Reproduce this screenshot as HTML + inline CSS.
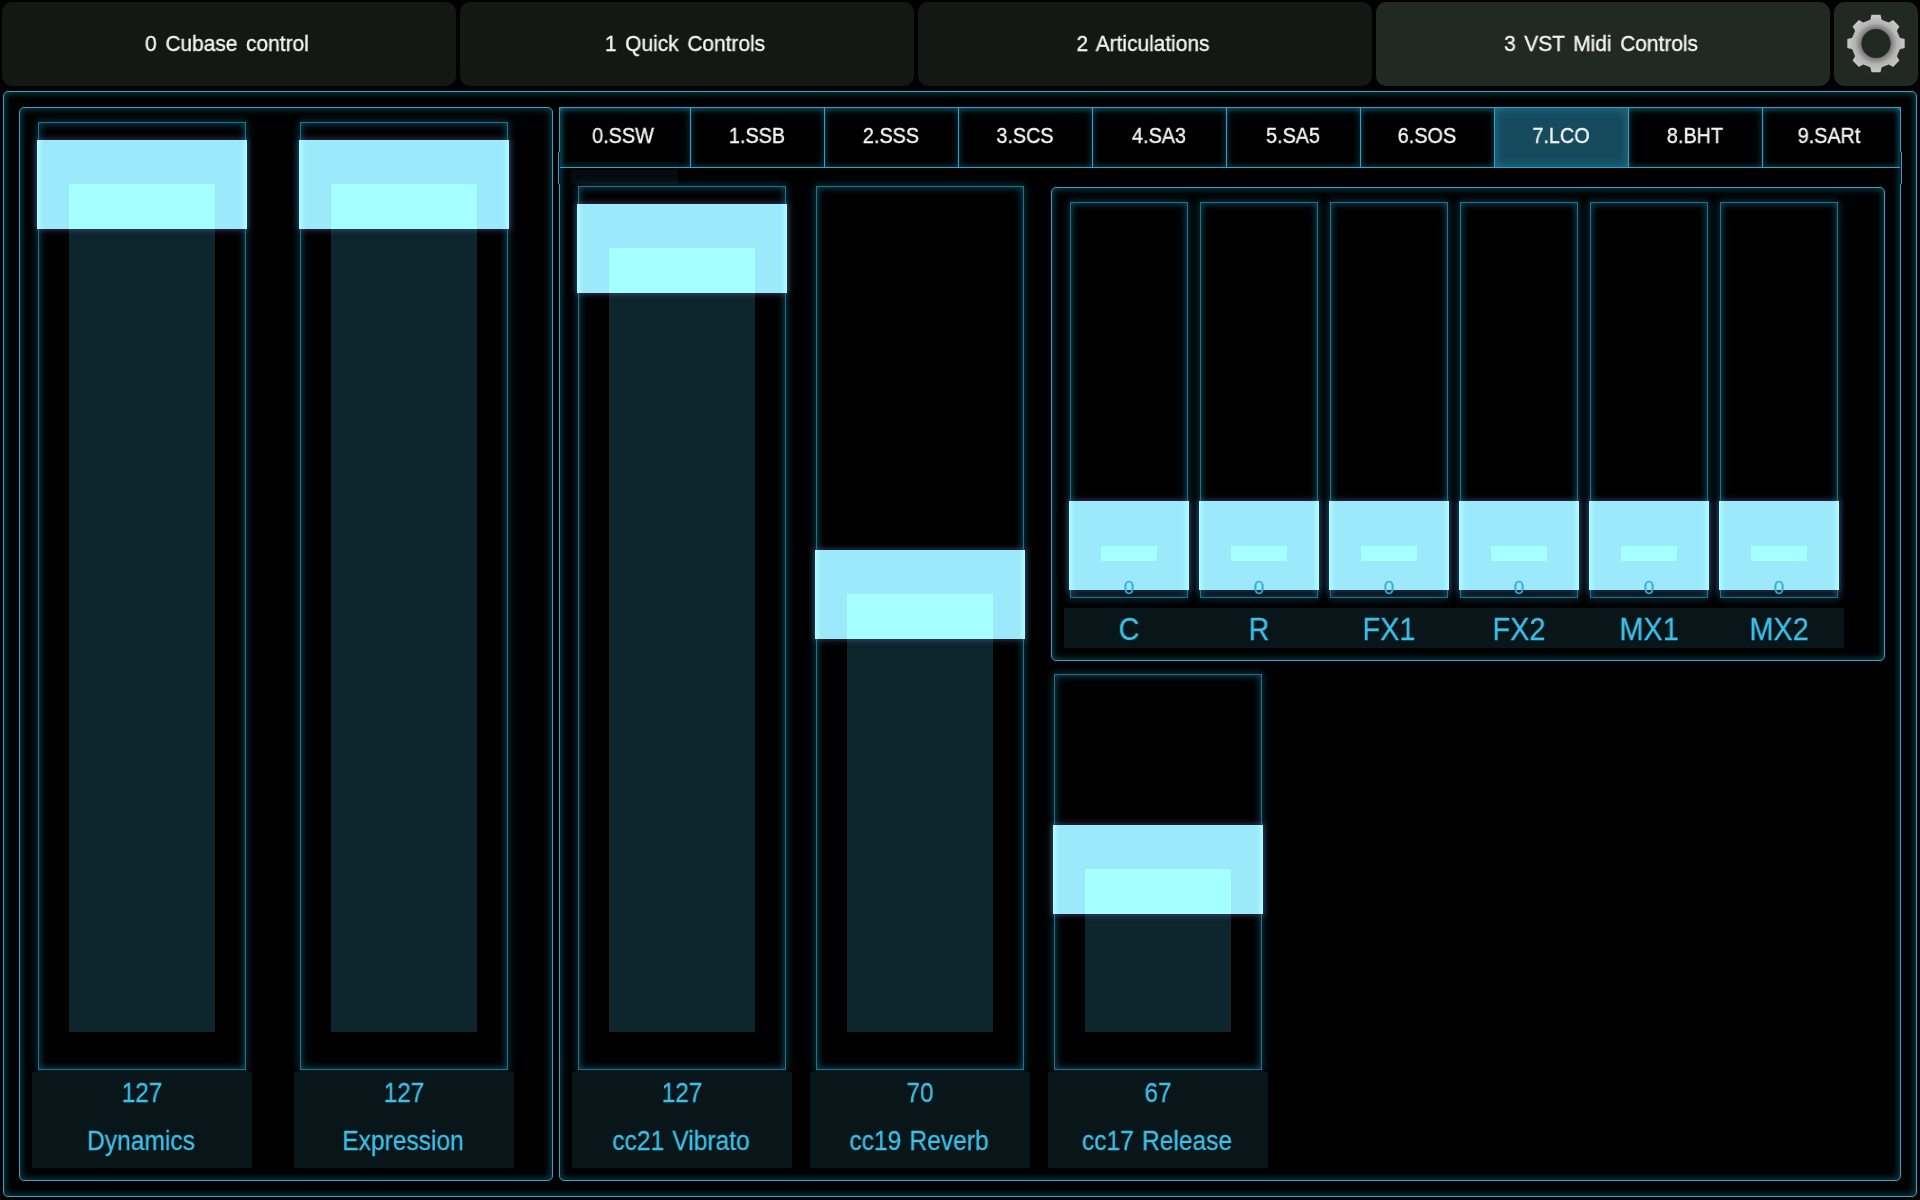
<!DOCTYPE html>
<html><head><meta charset="utf-8"><style>
html,body{margin:0;padding:0;background:#000;width:1920px;height:1200px;overflow:hidden;}
body{position:relative;font-family:"Liberation Sans",sans-serif;}
body>div{position:absolute;}
.t{text-align:center;white-space:nowrap;will-change:transform;}
</style></head><body>
<div style="left:2px;top:2px;width:454px;height:84px;background:#141814;border-radius:10px;"></div>
<div class="t" style="left:-73.0px;top:33px;width:600px;height:22px;line-height:22px;font-size:22px;color:#f4f4f4;transform:scaleX(0.95);word-spacing:3px;-webkit-text-stroke:0.35px #f4f4f4;">0 Cubase control</div>
<div style="left:460px;top:2px;width:454px;height:84px;background:#141814;border-radius:10px;"></div>
<div class="t" style="left:385.0px;top:33px;width:600px;height:22px;line-height:22px;font-size:22px;color:#f4f4f4;transform:scaleX(0.95);word-spacing:3px;-webkit-text-stroke:0.35px #f4f4f4;">1 Quick Controls</div>
<div style="left:918px;top:2px;width:454px;height:84px;background:#141814;border-radius:10px;"></div>
<div class="t" style="left:843.0px;top:33px;width:600px;height:22px;line-height:22px;font-size:22px;color:#f4f4f4;transform:scaleX(0.95);word-spacing:3px;-webkit-text-stroke:0.35px #f4f4f4;">2 Articulations</div>
<div style="left:1376px;top:2px;width:454px;height:84px;background:#222823;border-radius:10px;"></div>
<div class="t" style="left:1301.0px;top:33px;width:600px;height:22px;line-height:22px;font-size:22px;color:#f4f4f4;transform:scaleX(0.95);word-spacing:3px;-webkit-text-stroke:0.35px #f4f4f4;">3 VST Midi Controls</div>
<div style="left:1834px;top:2px;width:84px;height:84px;background:#222823;border-radius:10px;"></div>
<div style="left:3px;top:91px;width:1914px;height:1106px;border:1px solid #2ca4cc;border-radius:5px;box-sizing:border-box;box-shadow:inset 0 0 7px 1px rgba(25,115,145,0.6);"></div>
<div style="left:19px;top:107px;width:534px;height:1074px;border:1px solid #2ca4cc;border-radius:5px;box-sizing:border-box;box-shadow:inset 0 0 7px 1px rgba(25,115,145,0.6);"></div>
<div style="left:559px;top:107px;width:1342px;height:1074px;border:1px solid #2ca4cc;border-radius:5px;box-sizing:border-box;box-shadow:inset 0 0 7px 1px rgba(25,115,145,0.6);"></div>
<div style="left:571px;top:170px;width:107px;height:14px;background:#040c0f;"></div>
<div style="left:571px;top:162px;width:107px;height:2px;background:#030a0c;"></div>
<div style="left:559px;top:107px;width:132px;height:61px;border:1px solid #2ca4cc;box-sizing:border-box;box-shadow:inset 0 0 6px 1px rgba(25,115,145,0.45);"></div>
<div class="t" style="left:323.0px;top:125px;width:600px;height:22px;line-height:22px;font-size:22px;color:#f4f4f4;transform:scaleX(0.9);-webkit-text-stroke:0.35px #f4f4f4;">0.SSW</div>
<div style="left:690px;top:107px;width:135px;height:61px;border:1px solid #2ca4cc;box-sizing:border-box;box-shadow:inset 0 0 6px 1px rgba(25,115,145,0.45);"></div>
<div class="t" style="left:457.0px;top:125px;width:600px;height:22px;line-height:22px;font-size:22px;color:#f4f4f4;transform:scaleX(0.9);-webkit-text-stroke:0.35px #f4f4f4;">1.SSB</div>
<div style="left:824px;top:107px;width:135px;height:61px;border:1px solid #2ca4cc;box-sizing:border-box;box-shadow:inset 0 0 6px 1px rgba(25,115,145,0.45);"></div>
<div class="t" style="left:591.0px;top:125px;width:600px;height:22px;line-height:22px;font-size:22px;color:#f4f4f4;transform:scaleX(0.9);-webkit-text-stroke:0.35px #f4f4f4;">2.SSS</div>
<div style="left:958px;top:107px;width:135px;height:61px;border:1px solid #2ca4cc;box-sizing:border-box;box-shadow:inset 0 0 6px 1px rgba(25,115,145,0.45);"></div>
<div class="t" style="left:725.0px;top:125px;width:600px;height:22px;line-height:22px;font-size:22px;color:#f4f4f4;transform:scaleX(0.9);-webkit-text-stroke:0.35px #f4f4f4;">3.SCS</div>
<div style="left:1092px;top:107px;width:135px;height:61px;border:1px solid #2ca4cc;box-sizing:border-box;box-shadow:inset 0 0 6px 1px rgba(25,115,145,0.45);"></div>
<div class="t" style="left:859.0px;top:125px;width:600px;height:22px;line-height:22px;font-size:22px;color:#f4f4f4;transform:scaleX(0.9);-webkit-text-stroke:0.35px #f4f4f4;">4.SA3</div>
<div style="left:1226px;top:107px;width:135px;height:61px;border:1px solid #2ca4cc;box-sizing:border-box;box-shadow:inset 0 0 6px 1px rgba(25,115,145,0.45);"></div>
<div class="t" style="left:993.0px;top:125px;width:600px;height:22px;line-height:22px;font-size:22px;color:#f4f4f4;transform:scaleX(0.9);-webkit-text-stroke:0.35px #f4f4f4;">5.SA5</div>
<div style="left:1360px;top:107px;width:135px;height:61px;border:1px solid #2ca4cc;box-sizing:border-box;box-shadow:inset 0 0 6px 1px rgba(25,115,145,0.45);"></div>
<div class="t" style="left:1127.0px;top:125px;width:600px;height:22px;line-height:22px;font-size:22px;color:#f4f4f4;transform:scaleX(0.9);-webkit-text-stroke:0.35px #f4f4f4;">6.SOS</div>
<div style="left:1494px;top:107px;width:135px;height:61px;background:#164b5e;border:1px solid #2ca4cc;box-sizing:border-box;box-shadow:inset 0 0 8px 1px rgba(40,140,175,0.55);"></div>
<div class="t" style="left:1261.0px;top:125px;width:600px;height:22px;line-height:22px;font-size:22px;color:#f4f4f4;transform:scaleX(0.9);-webkit-text-stroke:0.35px #f4f4f4;">7.LCO</div>
<div style="left:1628px;top:107px;width:135px;height:61px;border:1px solid #2ca4cc;box-sizing:border-box;box-shadow:inset 0 0 6px 1px rgba(25,115,145,0.45);"></div>
<div class="t" style="left:1395.0px;top:125px;width:600px;height:22px;line-height:22px;font-size:22px;color:#f4f4f4;transform:scaleX(0.9);-webkit-text-stroke:0.35px #f4f4f4;">8.BHT</div>
<div style="left:1762px;top:107px;width:139px;height:61px;border:1px solid #2ca4cc;box-sizing:border-box;box-shadow:inset 0 0 6px 1px rgba(25,115,145,0.45);"></div>
<div class="t" style="left:1529.0px;top:125px;width:600px;height:22px;line-height:22px;font-size:22px;color:#f4f4f4;transform:scaleX(0.9);-webkit-text-stroke:0.35px #f4f4f4;">9.SARt</div>
<div style="left:559px;top:152px;width:1px;height:32px;background:#06161c;"></div>
<div style="left:558px;top:152px;width:1px;height:32px;background:#2ca4cc;"></div>
<div style="left:1900px;top:152px;width:1px;height:32px;background:#06161c;"></div>
<div style="left:1901px;top:152px;width:1px;height:32px;background:#2ca4cc;"></div>
<div style="left:38px;top:122px;width:208px;height:948px;border:1px solid #1f7390;border-radius:0px;box-sizing:border-box;box-shadow:inset 0 0 7px 1px rgba(25,115,145,0.6),0 0 8px 1px rgba(25,115,145,0.45);"></div>
<div style="left:69px;top:184px;width:146px;height:848px;background:#0d252d;"></div>
<div style="left:37px;top:140px;width:210px;height:89px;background:linear-gradient(90deg,#b0ffff 0,#9ce9fb 6px,#9ce9fb calc(100% - 6px),#b0ffff 100%);box-shadow:0 0 6px 1px rgba(100,100,170,0.55);"></div>
<div style="left:69px;top:184px;width:146px;height:45px;background:#a6ffff;"></div>
<div style="left:300px;top:122px;width:208px;height:948px;border:1px solid #1f7390;border-radius:0px;box-sizing:border-box;box-shadow:inset 0 0 7px 1px rgba(25,115,145,0.6),0 0 8px 1px rgba(25,115,145,0.45);"></div>
<div style="left:331px;top:184px;width:146px;height:848px;background:#0d252d;"></div>
<div style="left:299px;top:140px;width:210px;height:89px;background:linear-gradient(90deg,#b0ffff 0,#9ce9fb 6px,#9ce9fb calc(100% - 6px),#b0ffff 100%);box-shadow:0 0 6px 1px rgba(100,100,170,0.55);"></div>
<div style="left:331px;top:184px;width:146px;height:45px;background:#a6ffff;"></div>
<div style="left:578px;top:186px;width:208px;height:884px;border:1px solid #1f7390;border-radius:0px;box-sizing:border-box;box-shadow:inset 0 0 7px 1px rgba(25,115,145,0.6),0 0 8px 1px rgba(25,115,145,0.45);"></div>
<div style="left:609px;top:248px;width:146px;height:784px;background:#0d252d;"></div>
<div style="left:577px;top:204px;width:210px;height:89px;background:linear-gradient(90deg,#b0ffff 0,#9ce9fb 6px,#9ce9fb calc(100% - 6px),#b0ffff 100%);box-shadow:0 0 6px 1px rgba(100,100,170,0.55);"></div>
<div style="left:609px;top:248px;width:146px;height:45px;background:#a6ffff;"></div>
<div style="left:816px;top:186px;width:208px;height:884px;border:1px solid #1f7390;border-radius:0px;box-sizing:border-box;box-shadow:inset 0 0 7px 1px rgba(25,115,145,0.6),0 0 8px 1px rgba(25,115,145,0.45);"></div>
<div style="left:847px;top:594px;width:146px;height:438px;background:#0d252d;"></div>
<div style="left:815px;top:550px;width:210px;height:89px;background:linear-gradient(90deg,#b0ffff 0,#9ce9fb 6px,#9ce9fb calc(100% - 6px),#b0ffff 100%);box-shadow:0 0 6px 1px rgba(100,100,170,0.55);"></div>
<div style="left:847px;top:594px;width:146px;height:45px;background:#a6ffff;"></div>
<div style="left:1054px;top:674px;width:208px;height:396px;border:1px solid #1f7390;border-radius:0px;box-sizing:border-box;box-shadow:inset 0 0 7px 1px rgba(25,115,145,0.6),0 0 8px 1px rgba(25,115,145,0.45);"></div>
<div style="left:1085px;top:869px;width:146px;height:163px;background:#0d252d;"></div>
<div style="left:1053px;top:825px;width:210px;height:89px;background:linear-gradient(90deg,#b0ffff 0,#9ce9fb 6px,#9ce9fb calc(100% - 6px),#b0ffff 100%);box-shadow:0 0 6px 1px rgba(100,100,170,0.55);"></div>
<div style="left:1085px;top:869px;width:146px;height:45px;background:#a6ffff;"></div>
<div style="left:32px;top:1072px;width:220px;height:96px;background:#081519;"></div>
<div class="t" style="left:-158.0px;top:1080px;width:600px;height:27px;line-height:27px;font-size:27px;color:#3cc0e8;transform:scaleX(0.9);-webkit-text-stroke:0.3px #3cc0e8;">127</div>
<div class="t" style="left:-159.0px;top:1128px;width:600px;height:27px;line-height:27px;font-size:27px;color:#3cc0e8;transform:scaleX(0.91);word-spacing:1.5px;-webkit-text-stroke:0.3px #3cc0e8;">Dynamics</div>
<div style="left:294px;top:1072px;width:220px;height:96px;background:#081519;"></div>
<div class="t" style="left:104.0px;top:1080px;width:600px;height:27px;line-height:27px;font-size:27px;color:#3cc0e8;transform:scaleX(0.9);-webkit-text-stroke:0.3px #3cc0e8;">127</div>
<div class="t" style="left:103.0px;top:1128px;width:600px;height:27px;line-height:27px;font-size:27px;color:#3cc0e8;transform:scaleX(0.91);word-spacing:1.5px;-webkit-text-stroke:0.3px #3cc0e8;">Expression</div>
<div style="left:572px;top:1072px;width:220px;height:96px;background:#081519;"></div>
<div class="t" style="left:382.0px;top:1080px;width:600px;height:27px;line-height:27px;font-size:27px;color:#3cc0e8;transform:scaleX(0.9);-webkit-text-stroke:0.3px #3cc0e8;">127</div>
<div class="t" style="left:381.0px;top:1128px;width:600px;height:27px;line-height:27px;font-size:27px;color:#3cc0e8;transform:scaleX(0.91);word-spacing:1.5px;-webkit-text-stroke:0.3px #3cc0e8;">cc21 Vibrato</div>
<div style="left:810px;top:1072px;width:220px;height:96px;background:#081519;"></div>
<div class="t" style="left:620.0px;top:1080px;width:600px;height:27px;line-height:27px;font-size:27px;color:#3cc0e8;transform:scaleX(0.9);-webkit-text-stroke:0.3px #3cc0e8;">70</div>
<div class="t" style="left:619.0px;top:1128px;width:600px;height:27px;line-height:27px;font-size:27px;color:#3cc0e8;transform:scaleX(0.91);word-spacing:1.5px;-webkit-text-stroke:0.3px #3cc0e8;">cc19 Reverb</div>
<div style="left:1048px;top:1072px;width:220px;height:96px;background:#081519;"></div>
<div class="t" style="left:858.0px;top:1080px;width:600px;height:27px;line-height:27px;font-size:27px;color:#3cc0e8;transform:scaleX(0.9);-webkit-text-stroke:0.3px #3cc0e8;">67</div>
<div class="t" style="left:857.0px;top:1128px;width:600px;height:27px;line-height:27px;font-size:27px;color:#3cc0e8;transform:scaleX(0.91);word-spacing:1.5px;-webkit-text-stroke:0.3px #3cc0e8;">cc17 Release</div>
<div style="left:1051px;top:187px;width:834px;height:474px;border:1px solid #2ca4cc;border-radius:5px;box-sizing:border-box;box-shadow:inset 0 0 7px 1px rgba(25,115,145,0.6);"></div>
<div style="left:1070px;top:202px;width:118px;height:396px;border:1px solid #1f7390;border-radius:0px;box-sizing:border-box;box-shadow:inset 0 0 7px 1px rgba(25,115,145,0.6),0 0 8px 1px rgba(25,115,145,0.45);"></div>
<div style="left:1069px;top:501px;width:120px;height:89px;background:linear-gradient(90deg,#b0ffff 0,#9ce9fb 6px,#9ce9fb calc(100% - 6px),#b0ffff 100%);box-shadow:0 0 6px 1px rgba(100,100,170,0.55);"></div>
<div style="left:1101px;top:546px;width:56px;height:15px;background:#a6ffff;"></div>
<div class="t" style="left:829.0px;top:578px;width:600px;height:19px;line-height:19px;font-size:19px;color:#36b0d8;transform:scaleX(1.0);-webkit-text-stroke:0.3px #36b0d8;">0</div>
<div style="left:1200px;top:202px;width:118px;height:396px;border:1px solid #1f7390;border-radius:0px;box-sizing:border-box;box-shadow:inset 0 0 7px 1px rgba(25,115,145,0.6),0 0 8px 1px rgba(25,115,145,0.45);"></div>
<div style="left:1199px;top:501px;width:120px;height:89px;background:linear-gradient(90deg,#b0ffff 0,#9ce9fb 6px,#9ce9fb calc(100% - 6px),#b0ffff 100%);box-shadow:0 0 6px 1px rgba(100,100,170,0.55);"></div>
<div style="left:1231px;top:546px;width:56px;height:15px;background:#a6ffff;"></div>
<div class="t" style="left:959.0px;top:578px;width:600px;height:19px;line-height:19px;font-size:19px;color:#36b0d8;transform:scaleX(1.0);-webkit-text-stroke:0.3px #36b0d8;">0</div>
<div style="left:1330px;top:202px;width:118px;height:396px;border:1px solid #1f7390;border-radius:0px;box-sizing:border-box;box-shadow:inset 0 0 7px 1px rgba(25,115,145,0.6),0 0 8px 1px rgba(25,115,145,0.45);"></div>
<div style="left:1329px;top:501px;width:120px;height:89px;background:linear-gradient(90deg,#b0ffff 0,#9ce9fb 6px,#9ce9fb calc(100% - 6px),#b0ffff 100%);box-shadow:0 0 6px 1px rgba(100,100,170,0.55);"></div>
<div style="left:1361px;top:546px;width:56px;height:15px;background:#a6ffff;"></div>
<div class="t" style="left:1089.0px;top:578px;width:600px;height:19px;line-height:19px;font-size:19px;color:#36b0d8;transform:scaleX(1.0);-webkit-text-stroke:0.3px #36b0d8;">0</div>
<div style="left:1460px;top:202px;width:118px;height:396px;border:1px solid #1f7390;border-radius:0px;box-sizing:border-box;box-shadow:inset 0 0 7px 1px rgba(25,115,145,0.6),0 0 8px 1px rgba(25,115,145,0.45);"></div>
<div style="left:1459px;top:501px;width:120px;height:89px;background:linear-gradient(90deg,#b0ffff 0,#9ce9fb 6px,#9ce9fb calc(100% - 6px),#b0ffff 100%);box-shadow:0 0 6px 1px rgba(100,100,170,0.55);"></div>
<div style="left:1491px;top:546px;width:56px;height:15px;background:#a6ffff;"></div>
<div class="t" style="left:1219.0px;top:578px;width:600px;height:19px;line-height:19px;font-size:19px;color:#36b0d8;transform:scaleX(1.0);-webkit-text-stroke:0.3px #36b0d8;">0</div>
<div style="left:1590px;top:202px;width:118px;height:396px;border:1px solid #1f7390;border-radius:0px;box-sizing:border-box;box-shadow:inset 0 0 7px 1px rgba(25,115,145,0.6),0 0 8px 1px rgba(25,115,145,0.45);"></div>
<div style="left:1589px;top:501px;width:120px;height:89px;background:linear-gradient(90deg,#b0ffff 0,#9ce9fb 6px,#9ce9fb calc(100% - 6px),#b0ffff 100%);box-shadow:0 0 6px 1px rgba(100,100,170,0.55);"></div>
<div style="left:1621px;top:546px;width:56px;height:15px;background:#a6ffff;"></div>
<div class="t" style="left:1349.0px;top:578px;width:600px;height:19px;line-height:19px;font-size:19px;color:#36b0d8;transform:scaleX(1.0);-webkit-text-stroke:0.3px #36b0d8;">0</div>
<div style="left:1720px;top:202px;width:118px;height:396px;border:1px solid #1f7390;border-radius:0px;box-sizing:border-box;box-shadow:inset 0 0 7px 1px rgba(25,115,145,0.6),0 0 8px 1px rgba(25,115,145,0.45);"></div>
<div style="left:1719px;top:501px;width:120px;height:89px;background:linear-gradient(90deg,#b0ffff 0,#9ce9fb 6px,#9ce9fb calc(100% - 6px),#b0ffff 100%);box-shadow:0 0 6px 1px rgba(100,100,170,0.55);"></div>
<div style="left:1751px;top:546px;width:56px;height:15px;background:#a6ffff;"></div>
<div class="t" style="left:1479.0px;top:578px;width:600px;height:19px;line-height:19px;font-size:19px;color:#36b0d8;transform:scaleX(1.0);-webkit-text-stroke:0.3px #36b0d8;">0</div>
<div style="left:1064px;top:608px;width:780px;height:40px;background:#081519;"></div>
<div class="t" style="left:829.0px;top:614px;width:600px;height:31px;line-height:31px;font-size:31px;color:#3cc0e8;transform:scaleX(0.93);-webkit-text-stroke:0.3px #3cc0e8;">C</div>
<div class="t" style="left:959.0px;top:614px;width:600px;height:31px;line-height:31px;font-size:31px;color:#3cc0e8;transform:scaleX(0.93);-webkit-text-stroke:0.3px #3cc0e8;">R</div>
<div class="t" style="left:1089.0px;top:614px;width:600px;height:31px;line-height:31px;font-size:31px;color:#3cc0e8;transform:scaleX(0.93);-webkit-text-stroke:0.3px #3cc0e8;">FX1</div>
<div class="t" style="left:1219.0px;top:614px;width:600px;height:31px;line-height:31px;font-size:31px;color:#3cc0e8;transform:scaleX(0.93);-webkit-text-stroke:0.3px #3cc0e8;">FX2</div>
<div class="t" style="left:1349.0px;top:614px;width:600px;height:31px;line-height:31px;font-size:31px;color:#3cc0e8;transform:scaleX(0.93);-webkit-text-stroke:0.3px #3cc0e8;">MX1</div>
<div class="t" style="left:1479.0px;top:614px;width:600px;height:31px;line-height:31px;font-size:31px;color:#3cc0e8;transform:scaleX(0.93);-webkit-text-stroke:0.3px #3cc0e8;">MX2</div>
<svg style="position:absolute;left:1834px;top:2px" width="84" height="84" viewBox="0 0 84 84">
<defs><radialGradient id="gg" cx="42" cy="41.5" r="29" gradientUnits="userSpaceOnUse">
<stop offset="0.48" stop-color="#707070"/><stop offset="0.72" stop-color="#b4b4b4"/><stop offset="1" stop-color="#cacaca"/></radialGradient></defs>
<path fill="url(#gg)" fill-rule="evenodd" d="M36.30,17.67 L37.52,12.85 L46.48,12.85 L47.70,17.67 L54.81,20.62 L59.09,18.07 L65.43,24.41 L62.88,28.69 L65.83,35.80 L70.65,37.02 L70.65,45.98 L65.83,47.20 L62.88,54.31 L65.43,58.59 L59.09,64.93 L54.81,62.38 L47.70,65.33 L46.48,70.15 L37.52,70.15 L36.30,65.33 L29.19,62.38 L24.91,64.93 L18.57,58.59 L21.12,54.31 L18.17,47.20 L13.35,45.98 L13.35,37.02 L18.17,35.80 L21.12,28.69 L18.57,24.41 L24.91,18.07 L29.19,20.62 Z M56.6,41.5 A14.6,14.6 0 1,0 27.4,41.5 A14.6,14.6 0 1,0 56.6,41.5 Z"/>
</svg>
</body></html>
